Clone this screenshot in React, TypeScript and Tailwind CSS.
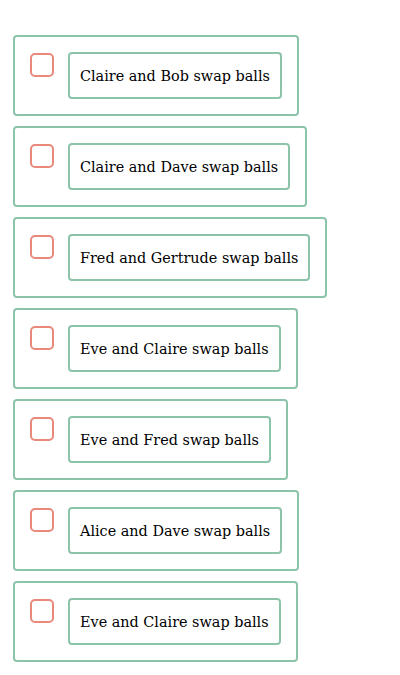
import React from "react";

const items = [
  "Claire and Bob swap balls",
  "Claire and Dave swap balls",
  "Fred and Gertrude swap balls",
  "Eve and Claire swap balls",
  "Eve and Fred swap balls",
  "Alice and Dave swap balls",
  "Eve and Claire swap balls",
];

export default function App() {
  return (
    <div className="bg-white min-h-[675px] pt-[35px] pl-[13px] flex flex-col items-start gap-[10px]">
      {items.map((t, i) => (
        <div
          key={i}
          className="flex items-start gap-[14px] border-2 border-[#8cc4a9] rounded-[4px] p-[15px]"
        >
          <div className="w-[24px] h-[24px] mt-[1px] border-2 border-[#e8897c] rounded-[5px] bg-white shrink-0" />
          <div
            className="border-2 border-[#8cc4a9] rounded-[4px] px-[10px] pt-[12px] pb-[10px] text-black text-[14.4px] leading-[21px] whitespace-nowrap"
            style={{ fontFamily: '"DejaVu Serif", serif' }}
          >
            {t}
          </div>
        </div>
      ))}
    </div>
  );
}
